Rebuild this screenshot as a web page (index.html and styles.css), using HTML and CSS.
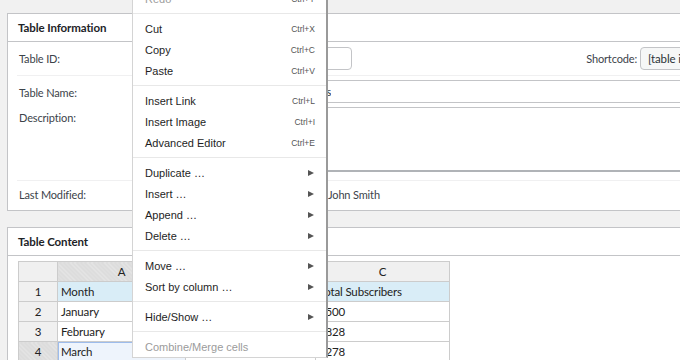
FILE: index.html
```html
<!DOCTYPE html>
<html lang="en">
<head>
<meta charset="utf-8">
<title>Edit Table</title>
<link rel="stylesheet" href="styles.css">
</head>
<body>
<div class="page">
  <section class="postbox">
    <h2 class="postbox-title">Table Information</h2>
    <div class="info-body">
      <div class="row row-id">
        <span class="label">Table ID:</span>
        <input class="field field-id" value="1">
        <span class="shortcode-label">Shortcode:</span>
        <input class="field field-shortcode" value="[table id=1 /]" readonly>
      </div>
      <div class="row row-name">
        <span class="label">Table Name:</span>
        <div class="field field-name"><span class="name-text">Monthly Email Subscribers</span></div>
      </div>
      <div class="row row-desc">
        <span class="label">Description:</span>
        <div class="field field-desc"></div>
      </div>
      <div class="row row-mod">
        <span class="label">Last Modified:</span>
        <span class="value"><span class="mod-date">May 4, 2021 10:21 am by</span><span class="mod-author">John Smith</span></span>
      </div>
    </div>
  </section>

  <section class="postbox postbox-content">
    <h2 class="postbox-title">Table Content</h2>
    <div class="content-body">
      <table class="grid">
        <colgroup>
          <col class="c-row"><col class="c-a"><col class="c-b"><col class="c-c">
        </colgroup>
        <thead>
          <tr><th class="corner"></th><th class="col-sel">A</th><th>B</th><th>C</th></tr>
        </thead>
        <tbody>
          <tr class="head-row"><th>1</th><td>Month</td><td>New Subscribers</td><td>Total Subscribers</td></tr>
          <tr><th>2</th><td>January</td><td>500</td><td>1500</td></tr>
          <tr><th>3</th><td>February</td><td>328</td><td>1828</td></tr>
          <tr><th class="row-sel">4</th><td class="current">March</td><td>450</td><td>2278</td></tr>
        </tbody>
      </table>
    </div>
  </section>

  <div class="context-menu">
    <div class="item disabled"><span>Redo</span><span class="key">Ctrl+Y</span></div>
    <div class="sep"></div>
    <div class="item"><span>Cut</span><span class="key">Ctrl+X</span></div>
    <div class="item"><span>Copy</span><span class="key">Ctrl+C</span></div>
    <div class="item"><span>Paste</span><span class="key">Ctrl+V</span></div>
    <div class="sep"></div>
    <div class="item"><span>Insert Link</span><span class="key">Ctrl+L</span></div>
    <div class="item"><span>Insert Image</span><span class="key">Ctrl+I</span></div>
    <div class="item"><span>Advanced Editor</span><span class="key">Ctrl+E</span></div>
    <div class="sep"></div>
    <div class="item"><span>Duplicate …</span><span class="arrow"></span></div>
    <div class="item"><span>Insert …</span><span class="arrow"></span></div>
    <div class="item"><span>Append …</span><span class="arrow"></span></div>
    <div class="item"><span>Delete …</span><span class="arrow"></span></div>
    <div class="sep"></div>
    <div class="item"><span>Move …</span><span class="arrow"></span></div>
    <div class="item"><span>Sort by column …</span><span class="arrow"></span></div>
    <div class="sep"></div>
    <div class="item"><span>Hide/Show …</span><span class="arrow"></span></div>
    <div class="sep"></div>
    <div class="item disabled"><span>Combine/Merge cells</span></div>
  </div>
</div>
</body>
</html>
```

FILE: styles.css
```css
html, body {
  margin: 0;
  padding: 0;
}
body {
  background: #f1f1f1;
  overflow: hidden;
  font-family: Lato, "Open Sans", sans-serif;
  font-size: 11px;
  letter-spacing: -0.15px;
  color: #3c434a;
}
.page {
  position: relative;
  width: 795px;
  padding: 13px 0 0 7px;
}
.postbox {
  background: #fff;
  border: 1px solid #c3c4c7;
}
.postbox-content {
  margin-top: 16px;
}
.postbox-title {
  margin: 0;
  height: 27px;
  line-height: 28px;
  padding: 0 10px;
  font-size: 11.5px;
  font-weight: 700;
  letter-spacing: -0.1px;
  color: #1d2327;
  border-bottom: 1px solid #c3c4c7;
}
.info-body {
  padding: 0 9px;
}
.row {
  display: flex;
  align-items: center;
}
.label {
  width: 131px;
  flex: none;
  padding-left: 2px;
  line-height: 20px;
}
.field {
  box-sizing: border-box;
  height: 23px;
  border: 1px solid #c3c4c7;
  border-radius: 4px;
  background: #fff;
  font: inherit;
  letter-spacing: inherit;
  color: #2c3338;
  padding: 0 7px;
}
.row-id {
  height: 33px;
  border-bottom: 1px solid #f0f0f1;
}
.field-id {
  width: 202px;
}
.shortcode-label {
  margin-left: auto;
  margin-right: 3px;
}
.field-shortcode {
  width: 152px;
  background: #f6f7f7;
  font-size: 11.5px;
  padding-left: 7px;
}
.row-name {
  padding-top: 4px;
}
.row-name .label {
  margin-top: 3px;
}
.field-name {
  flex: 1;
  display: flex;
  align-items: center;
}
.name-text {
  display: inline-block;
  width: 173px;
  text-align: right;
  white-space: nowrap;
  overflow: hidden;
}
.row-desc {
  align-items: flex-start;
  padding: 4px 0 8px;
  border-bottom: 1px solid #f0f0f1;
}
.row-desc .label {
  padding-top: 1px;
}
.field-desc {
  flex: 1;
  height: 65px;
  border-bottom: 2px solid #b0b3b7;
  border-radius: 4px;
}
.row-mod {
  height: 29px;
}
.row-mod .label, .row-mod .value {
  margin-top: -2px;
}
.mod-date {
  display: inline-block;
  width: 176px;
  white-space: nowrap;
  overflow: hidden;
  text-align: right;
  vertical-align: top;
}
.mod-author {
  padding-left: 2px;
}

.content-body {
  padding: 5px 10px 40px;
}
.grid {
  border-collapse: collapse;
  table-layout: fixed;
  width: 431px;
  font-size: 11.5px;
  color: #222;
}
.c-row { width: 39px; }
.c-a { width: 128px; }
.c-b { width: 130px; }
.c-c { width: 134px; }
.grid th, .grid td {
  box-sizing: border-box;
  height: 20px;
  border: 1px solid #ccc;
  padding: 0 3px;
  line-height: 18px;
  white-space: nowrap;
  overflow: hidden;
}
.grid th {
  background: #f0f0f0;
  font-weight: normal;
  text-align: center;
  color: #222;
}
.grid th.col-sel, .grid th.row-sel {
  background: #dcdcdc repeating-linear-gradient(45deg, rgba(255,255,255,0.25) 0 1px, transparent 1px 3px);
}
.grid td {
  background: #fff;
}
.grid .head-row td {
  background: #d9edf7;
}
.grid td.current {
  background: #eef4fc;
  box-shadow: inset 1px 1px 0 #9dbcec;
}

.context-menu {
  position: absolute;
  left: 132px;
  top: -13px;
  width: 193px;
  background: #fff;
  border: 1px solid #d4d4d4;
  border-right: 2px solid #9a9a9a;
  font-family: "Liberation Sans", Arial, sans-serif;
  font-size: 11px;
  letter-spacing: 0;
  color: #1e1e1e;
}
.item {
  display: flex;
  align-items: center;
  justify-content: space-between;
  height: 21px;
  padding: 0 11px 0 12px;
}
.item.disabled {
  color: #9b9b9b;
}
.key {
  font-size: 8.5px;
  color: #555;
}
.arrow {
  width: 0;
  height: 0;
  margin-right: 1px;
  border-left: 6px solid #555;
  border-top: 3.5px solid transparent;
  border-bottom: 3.5px solid transparent;
}
.sep {
  height: 1px;
  margin: 4px 0;
  background: #e8e8e8;
}
```
